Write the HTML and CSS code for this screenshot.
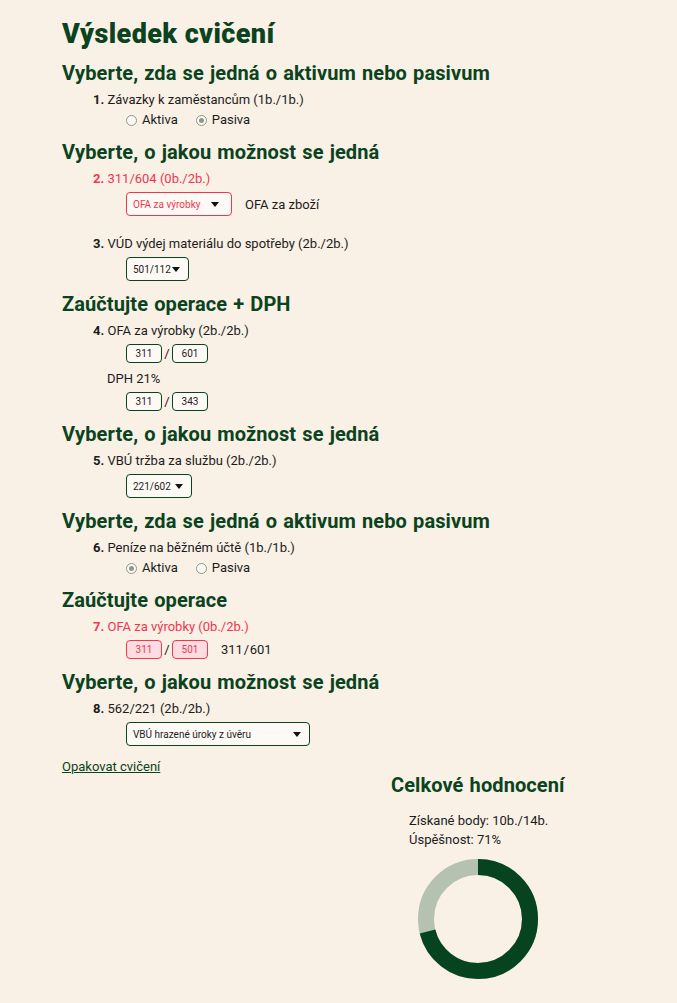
FILE: index.html
```html
<!DOCTYPE html>
<html lang="cs">
<head>
<meta charset="utf-8">
<title>Výsledek cvičení</title>
<link rel="stylesheet" href="styles.css">
</head>
<body>
<main class="page">
  <h1 class="title">Výsledek cvičení</h1>

  <h2 class="sec">Vyberte, zda se jedná o aktivum nebo pasivum</h2>
  <div class="q">
    <div class="qline"><b>1.</b> Závazky k zaměstancům (1b./1b.)</div>
    <div class="radios">
      <span class="radio"><span class="dot"></span>Aktiva</span>
      <span class="radio"><span class="dot on"></span>Pasiva</span>
    </div>
  </div>

  <h2 class="sec">Vyberte, o jakou možnost se jedná</h2>
  <div class="q">
    <div class="qline wrong"><b>2.</b> 311/604 (0b./2b.)</div>
    <div class="ctrl">
      <div class="sel sel-bad w106"><span>OFA za výrobky</span><i class="caret"></i></div>
      <span class="correct">OFA za zboží</span>
    </div>
  </div>
  <div class="q q-next">
    <div class="qline"><b>3.</b> VÚD výdej materiálu do spotřeby (2b./2b.)</div>
    <div class="ctrl">
      <div class="sel w63"><span>501/112</span><i class="caret"></i></div>
    </div>
  </div>

  <h2 class="sec">Zaúčtujte operace + DPH</h2>
  <div class="q">
    <div class="qline"><b>4.</b> OFA za výrobky (2b./2b.)</div>
    <div class="ctrl">
      <span class="box">311</span><span class="slash">/</span><span class="box">601</span>
    </div>
    <div class="sub">DPH 21%</div>
    <div class="ctrl">
      <span class="box">311</span><span class="slash">/</span><span class="box">343</span>
    </div>
  </div>

  <h2 class="sec">Vyberte, o jakou možnost se jedná</h2>
  <div class="q">
    <div class="qline"><b>5.</b> VBÚ tržba za službu (2b./2b.)</div>
    <div class="ctrl">
      <div class="sel w66"><span>221/602</span><i class="caret"></i></div>
    </div>
  </div>

  <h2 class="sec">Vyberte, zda se jedná o aktivum nebo pasivum</h2>
  <div class="q">
    <div class="qline"><b>6.</b> Peníze na běžném účtě (1b./1b.)</div>
    <div class="radios">
      <span class="radio"><span class="dot on"></span>Aktiva</span>
      <span class="radio"><span class="dot"></span>Pasiva</span>
    </div>
  </div>

  <h2 class="sec">Zaúčtujte operace</h2>
  <div class="q">
    <div class="qline wrong"><b>7.</b> OFA za výrobky (0b./2b.)</div>
    <div class="ctrl">
      <span class="box box-bad">311</span><span class="slash">/</span><span class="box box-bad">501</span>
      <span class="correct answer">311 / 601</span>
    </div>
  </div>

  <h2 class="sec">Vyberte, o jakou možnost se jedná</h2>
  <div class="q">
    <div class="qline"><b>8.</b> 562/221 (2b./2b.)</div>
    <div class="ctrl">
      <div class="sel w184"><span>VBÚ hrazené úroky z úvěru</span><i class="caret"></i></div>
    </div>
  </div>

  <div class="bottom">
    <a class="again" href="#">Opakovat cvičení</a>
    <section class="result">
      <h2 class="sec result-title">Celkové hodnocení</h2>
      <div class="stats">
        <div>Získané body: 10b./14b.</div>
        <div>Úspěšnost: 71%</div>
      </div>
      <svg class="donut" width="120" height="120" viewBox="0 0 120 120">
        <circle cx="60" cy="60" r="52" fill="none" stroke="#b6c2b1" stroke-width="16"/>
        <circle cx="60" cy="60" r="52" fill="none" stroke="#05441f" stroke-width="16"
          stroke-dasharray="231.98 326.73" transform="rotate(-90 60 60)"/>
      </svg>
    </section>
  </div>
</main>
</body>
</html>
```
FILE: styles.css
```css
* { box-sizing: border-box; }
html, body { margin: 0; padding: 0; }
body {
  background: #f9f0e6;
  font-family: "Roboto", "Liberation Sans", sans-serif;
  color: #1c1c1c;
  font-size: 13px;
}
.page {
  padding: 18px 62px 40px 62px;
}
.title {
  margin: 0;
  font-size: 27px;
  line-height: 32px;
  font-weight: 900;
  letter-spacing: 0.4px;
  color: #0a4320;
}
.sec {
  margin: 11px 0 6px 0;
  font-size: 20px;
  line-height: 24px;
  font-weight: 700;
  letter-spacing: 0.1px;
  word-spacing: 1px;
  color: #0a4320;
}
.q {
  padding-left: 31px;
}
.q-next { margin-top: 19px; }
.qline {
  line-height: 18px;
}
.qline b { font-weight: 700; }
.wrong { color: #f2364f; }
.radios {
  display: flex;
  align-items: center;
  gap: 18px;
  padding-left: 33px;
  margin-top: 2px;
  line-height: 18px;
}
.radio {
  display: inline-flex;
  align-items: center;
  gap: 5px;
}
.dot {
  width: 11px;
  height: 11px;
  border-radius: 50%;
  border: 1px solid #8a9a88;
  background: #fbf8f3;
  display: inline-flex;
  align-items: center;
  justify-content: center;
}
.dot.on::after {
  content: "";
  width: 5px;
  height: 5px;
  border-radius: 50%;
  background: #8a9a88;
}
.ctrl {
  display: flex;
  align-items: center;
  padding-left: 33px;
  margin-top: 4px;
}
.sel {
  height: 24px;
  border: 1px solid #0a4320;
  border-radius: 4px;
  background: #fdf9f4;
  display: flex;
  align-items: center;
  justify-content: space-between;
  padding: 0 8px 0 6px;
  font-size: 10px;
  color: #1c1c1c;
}
.sel-bad {
  border-color: #f2364f;
  color: #f2364f;
  padding-right: 12px;
}
.w106 { width: 106px; }
.w63 { width: 63px; }
.w66 { width: 66px; }
.w184 { width: 184px; }
.caret {
  width: 0;
  height: 0;
  border-left: 4px solid transparent;
  border-right: 4px solid transparent;
  border-top: 5px solid #111;
}
.correct {
  margin-left: 13px;
  font-size: 13px;
  color: #1c1c1c;
}
.answer {
  word-spacing: -2.5px;
}
.box {
  display: inline-flex;
  align-items: center;
  justify-content: center;
  width: 36px;
  height: 19px;
  border: 1px solid #0a4320;
  border-radius: 4px;
  background: #fdf9f4;
  font-size: 10px;
  color: #1c1c1c;
}
.box-bad {
  border-color: #f2364f;
  background: #fddde1;
  color: #f2364f;
}
.slash {
  width: 10px;
  text-align: center;
  font-size: 13px;
}
.sub {
  padding-left: 14px;
  margin-top: 7px;
  line-height: 18px;
}
.bottom {
  display: grid;
  grid-template-columns: 329px 1fr;
  margin-top: 12px;
  align-items: start;
}
.again {
  color: #0a4320;
  text-decoration: underline;
  line-height: 18px;
}
.result-title {
  margin: 15px 0 0 0;
}
.stats {
  padding-left: 18px;
  margin-top: 14px;
  line-height: 19px;
}
.donut {
  display: block;
  margin: 10px 0 0 27px;
}
```
